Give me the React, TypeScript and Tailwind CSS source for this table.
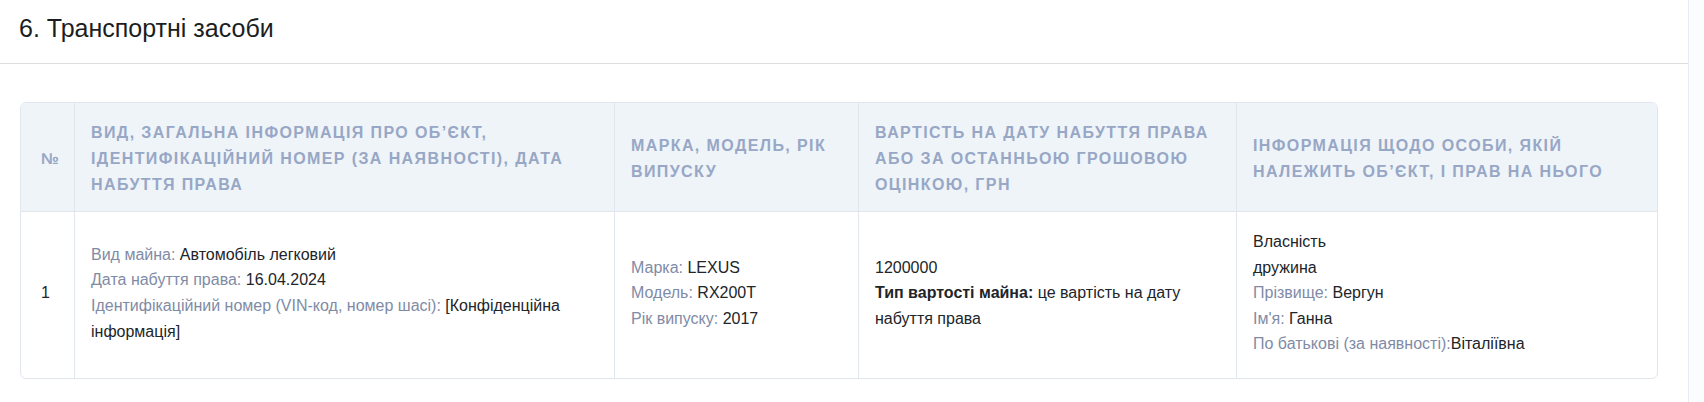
import React from "react";

const Label = ({ children }: { children: React.ReactNode }) => (
  <span className="text-[#7f8ba6]">{children}</span>
);

export default function App() {
  return (
    <div
      className="flex w-[1704px] h-[402px] bg-white text-[#212529]"
      style={{ fontFamily: '"Liberation Sans", Arial, sans-serif' }}
    >
      <div className="w-[1688px] flex flex-col">
        <div className="h-[64px] border-b border-[#dedede] pl-[19px] pt-[10px]">
          <h2 className="text-[25px] leading-[36px] font-normal text-[#1b1e21]">
            6. Транспортні засоби
          </h2>
        </div>
        <div className="pl-5 pt-[38px]">
          <div className="w-[1638px] border border-[#e1e6ee] rounded-[6px] overflow-hidden">
            <table className="w-full table-fixed border-separate border-spacing-0">
              <colgroup>
                <col className="w-[53px]" />
                <col className="w-[540px]" />
                <col className="w-[244px]" />
                <col className="w-[378px]" />
                <col className="w-[421px]" />
              </colgroup>
              <thead>
                <tr className="bg-[#eff4f9] text-[#97a7c5] text-[16px] leading-[26px] font-bold uppercase tracking-[1.4px] text-left align-middle">
                  <th className="h-[109px] border-b border-[#e1e6ee] pl-5 pr-0 pt-1 font-bold tracking-normal">№</th>
                  <th className="h-[109px] border-b border-l border-[#e1e6ee] px-4 pt-1 font-bold">
                    Вид, загальна інформація про об’єкт, ідентифікаційний номер (за наявності), дата набуття права
                  </th>
                  <th className="h-[109px] border-b border-l border-[#e1e6ee] px-4 pt-1 font-bold">
                    Марка, модель, рік випуску
                  </th>
                  <th className="h-[109px] border-b border-l border-[#e1e6ee] px-4 pt-1 font-bold">
                    Вартість на дату набуття права або за останньою грошовою оцінкою, грн
                  </th>
                  <th className="h-[109px] border-b border-l border-[#e1e6ee] px-4 pt-1 font-bold">
                    Інформація щодо особи, якій належить об’єкт, і прав на нього
                  </th>
                </tr>
              </thead>
              <tbody>
                <tr className="text-[16px] leading-[25.6px] align-middle">
                  <td className="h-[166px] pl-5 pb-1">1</td>
                  <td className="h-[166px] border-l border-[#e1e6ee] px-4 pb-1">
                    <div>
                      <Label>Вид майна:</Label> Автомобіль легковий
                    </div>
                    <div>
                      <Label>Дата набуття права:</Label> 16.04.2024
                    </div>
                    <div>
                      <Label>Ідентифікаційний номер (VIN-код, номер шасі):</Label> [Конфіденційна інформація]
                    </div>
                  </td>
                  <td className="h-[166px] border-l border-[#e1e6ee] px-4 pb-1">
                    <div>
                      <Label>Марка:</Label> LEXUS
                    </div>
                    <div>
                      <Label>Модель:</Label> RX200T
                    </div>
                    <div>
                      <Label>Рік випуску:</Label> 2017
                    </div>
                  </td>
                  <td className="h-[166px] border-l border-[#e1e6ee] px-4 pb-1">
                    <div>1200000</div>
                    <div>
                      <span className="font-bold">Тип вартості майна:</span> це вартість на дату набуття права
                    </div>
                  </td>
                  <td className="h-[166px] border-l border-[#e1e6ee] px-4 pb-1">
                    <div>Власність</div>
                    <div>дружина</div>
                    <div>
                      <Label>Прізвище:</Label> Вергун
                    </div>
                    <div>
                      <Label>Ім'я:</Label> Ганна
                    </div>
                    <div>
                      <Label>По батькові (за наявності):</Label>Віталіївна
                    </div>
                  </td>
                </tr>
              </tbody>
            </table>
          </div>
        </div>
      </div>
      <div className="w-4 h-full border-l border-[#e8edf5] bg-[#fbfcfe]" />
    </div>
  );
}
